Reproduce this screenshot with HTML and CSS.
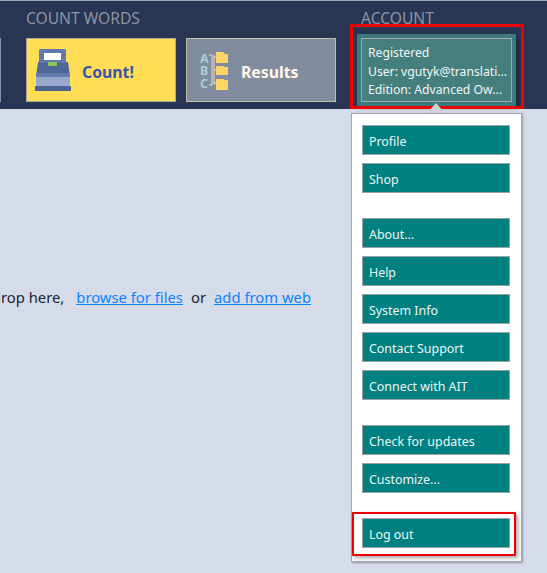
FILE: index.html
```html
<!DOCTYPE html>
<html lang="en">
<head>
  <meta charset="UTF-8"/>
  <title>Count words</title>
  <link rel="stylesheet" href="styles.css">
</head>
<body>

<header class="topbar">
  <div class="stub"></div>

  <section class="group">
    <div class="group-title">COUNT WORDS</div>
    <div class="tiles">
      <button class="tile tile-count">
        <svg class="tile-icon" width="36" height="42" viewBox="0 0 36 42">
          <path d="M4 1l1-1h25l1 1v13H4z" fill="#6179ae"/>
          <rect x="9" y="4" width="17" height="7" fill="#ffffff"/>
          <path d="M3 13h30l2 15H1z" fill="#4f6797"/>
          <path d="M5 12h26v2H5z" fill="#6179ae"/>
          <rect x="13" y="13" width="9" height="4" fill="#8fc45a"/>
          <rect x="1" y="24" width="34" height="4" fill="#6179ae"/>
          <rect x="1" y="28" width="34" height="9" fill="#98a8cd"/>
          <rect x="0" y="37" width="36" height="5" rx="1" fill="#4c6494"/>
        </svg>
        <span class="tile-label">Count!</span>
      </button>
      <button class="tile tile-results">
        <svg class="tile-icon" width="30" height="39" viewBox="0 0 30 39">
          <text x="1" y="12" class="abc">A</text>
          <text x="1" y="24" class="abc">B</text>
          <text x="1" y="37" class="abc">C</text>
          <path d="M10 4h3v30h-3M15 4v30M15 6h2M15 19h2M15 32h2" fill="none" stroke="#e6dcc8" stroke-width="1"/>
          <path d="M17 1h7l2 2h3v9H17z" fill="#ffd566"/>
          <path d="M17 15h7l2 1h3v8H17z" fill="#ffd566"/>
          <path d="M17 28h7l2 1h3v10H17z" fill="#ffd566"/>
        </svg>
        <span class="tile-label">Results</span>
      </button>
    </div>
  </section>

  <section class="group group-account">
    <div class="group-title">ACCOUNT</div>
    <div class="account-frame">
      <div class="account-tile">
        <div>Registered</div>
        <div>User: vgutyk@translati...</div>
        <div>Edition: Advanced Ow...</div>
      </div>
    </div>
  </section>
</header>

<main class="dropzone">
  <div class="drop-line">
    <span class="drop-hint">Drag and drop here,</span>
    <a href="#">browse for files</a>
    <span>or</span>
    <a href="#">add from web</a>
  </div>
</main>

<div class="menu-caret"></div>
<nav class="menu">
  <div class="menu-group">
    <a class="menu-item" href="#">Profile</a>
    <a class="menu-item" href="#">Shop</a>
  </div>
  <div class="menu-group">
    <a class="menu-item" href="#">About...</a>
    <a class="menu-item" href="#">Help</a>
    <a class="menu-item" href="#">System Info</a>
    <a class="menu-item" href="#">Contact Support</a>
    <a class="menu-item" href="#">Connect with AIT</a>
  </div>
  <div class="menu-group">
    <a class="menu-item" href="#">Check for updates</a>
    <a class="menu-item" href="#">Customize...</a>
  </div>
  <div class="menu-group">
    <a class="menu-item" href="#">Log out</a>
  </div>
</nav>

<!-- red callouts -->
<div class="callout callout-account"></div>
<div class="callout callout-logout"></div>

</body>
</html>
```

FILE: styles.css
```css
body {
  margin: 0;
  height: 573px;
  overflow: hidden;
  position: relative;
  background: #d6dbe9;
  font-family: "Noto Sans", "Open Sans", sans-serif;
  font-size: 13px;
}

.topbar {
  display: flex;
  height: 109px;
  box-sizing: border-box;
  background: #283654;
  border-top: 1px solid #a3a9b4;
}
.stub {
  width: 1px;
  height: 64px;
  margin-top: 37px;
  background: #8a93a3;
  flex: none;
}
.group {
  margin-left: 25px;
  flex: none;
}
.group-account {
  margin-left: 21px;
}
.group-title {
  height: 37px;
  padding-top: 7px;
  box-sizing: border-box;
  font-size: 15.6px;
  line-height: 20px;
  color: #8d93a0;
}
.group-account .group-title {
  padding-left: 4px;
}
.tiles {
  display: flex;
  gap: 10px;
}
.tile {
  display: flex;
  align-items: center;
  width: 150px;
  height: 64px;
  padding: 0;
  box-sizing: border-box;
  font-family: inherit;
  font-size: 15.8px;
  font-weight: bold;
}
.tile-icon {
  flex: none;
  overflow: visible;
}
.tile-label {
  margin-top: 4px;
}
.tile-count {
  gap: 11px;
  padding-left: 8px;
  background: #ffdd55;
  border: 1px solid #a9a9a0;
  color: #3654b0;
}
.tile-results {
  gap: 12px;
  padding-left: 12px;
  background: #808d9e;
  border: 1px solid #c8bfb0;
  color: #fff6ea;
}
.abc {
  font-size: 12.5px;
  font-weight: bold;
  fill: #a9cdd6;
}

.account-frame {
  width: 159px;
  margin-top: -4px;
  padding: 4px;
  box-sizing: border-box;
  background: #3b7a7c;
  box-shadow: 2px 2px 4px rgba(0,0,0,0.35);
}
.account-tile {
  height: 64px;
  padding: 5px 0 0 6px;
  box-sizing: border-box;
  background: #457f7d;
  border: 1px solid #a5abab;
  color: #f2f6f4;
  font-size: 12.2px;
  line-height: 18.5px;
  white-space: nowrap;
  overflow: hidden;
}

.dropzone {
  padding-top: 178px;
}
.drop-line {
  display: flex;
  justify-content: flex-end;
  gap: 8px;
  width: 311px;
  white-space: nowrap;
  font-size: 14.8px;
  line-height: 20px;
  color: #1e2433;
}
.drop-line a {
  color: #0a84ff;
}
.drop-hint {
  margin-right: 4px;
}

.menu {
  position: absolute;
  left: 351px;
  top: 113px;
  width: 171px;
  height: 449px;
  box-sizing: border-box;
  padding: 11px 10px 0;
  background: #fff;
  border: 1px solid #a4a8b0;
  box-shadow: 1px 1px 2px rgba(0,0,0,0.3);
  display: flex;
  flex-direction: column;
  gap: 25px;
}
.menu-group {
  display: flex;
  flex-direction: column;
  gap: 8px;
}
.menu-item {
  display: block;
  height: 30px;
  width: 148px;
  padding: 4px 0 0 6px;
  box-sizing: border-box;
  background: #008080;
  border: 1px solid #9aa3a6;
  color: #eef6f4;
  font-size: 12.4px;
  line-height: 24px;
  text-decoration: none;
  white-space: nowrap;
}
.menu-caret {
  position: absolute;
  left: 427px;
  top: 103px;
  width: 0;
  height: 0;
  border-left: 9px solid transparent;
  border-right: 9px solid transparent;
  border-bottom: 10px solid #cfd2da;
  z-index: 3;
}

.callout {
  position: absolute;
  box-sizing: border-box;
  border: 3px solid #f00000;
  z-index: 2;
}
.callout-account {
  left: 350px;
  top: 24px;
  width: 174px;
  height: 85px;
}
.callout-logout {
  left: 352px;
  top: 512px;
  width: 164px;
  height: 44px;
  border-width: 2px;
  box-shadow: 2px 2px 4px rgba(0,0,0,0.35);
}
```
